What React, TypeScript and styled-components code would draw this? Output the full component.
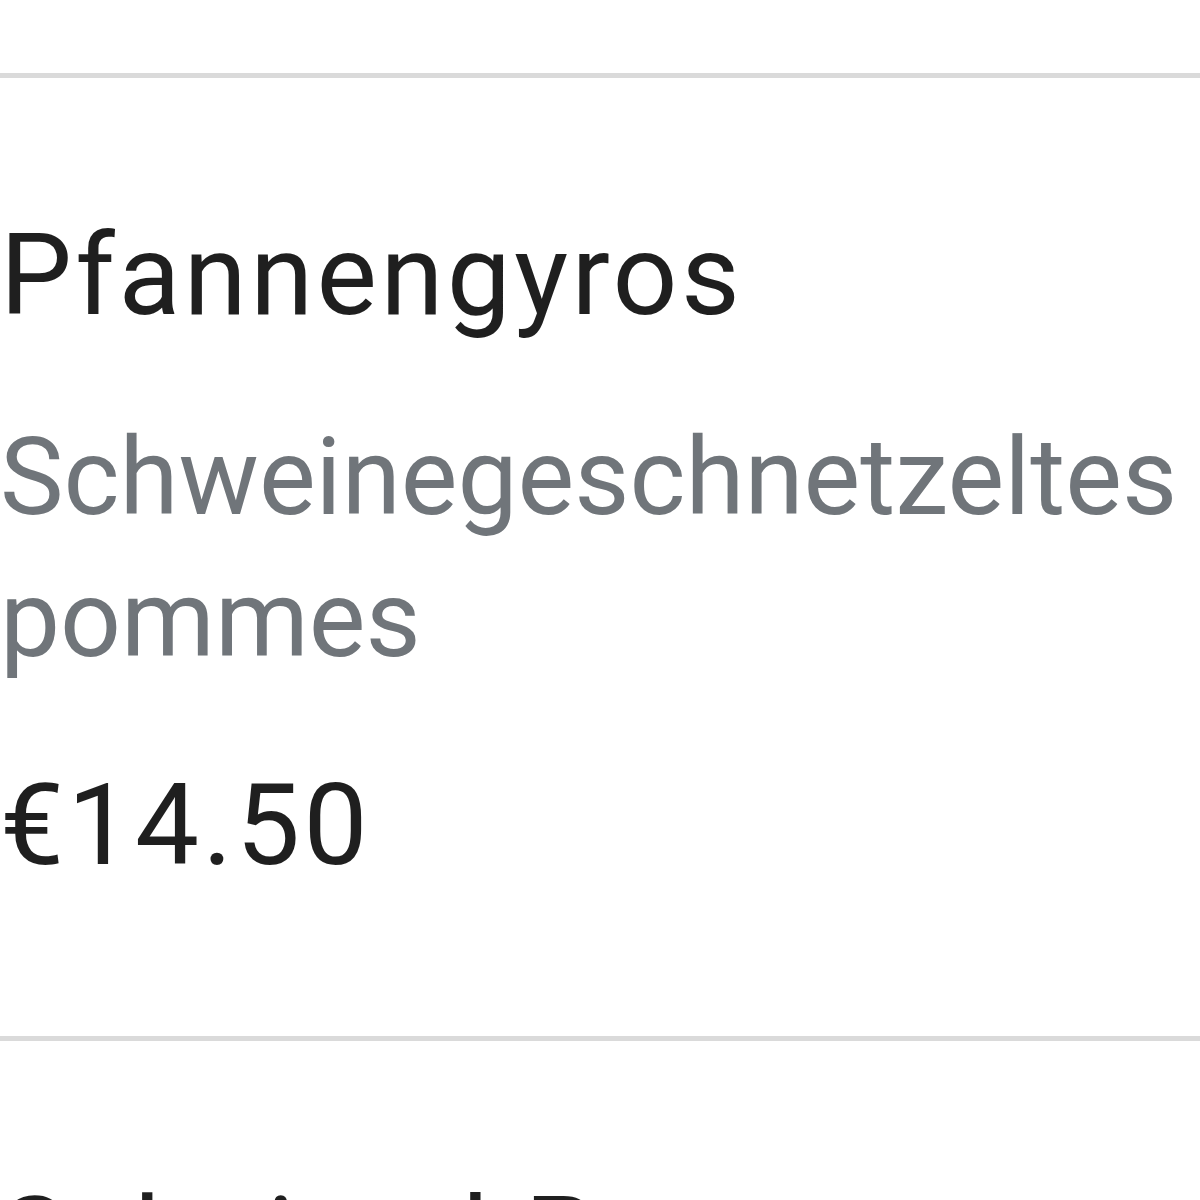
import React from 'react';
import styled, { createGlobalStyle } from 'styled-components';

const GlobalStyle = createGlobalStyle`
  html, body {
    margin: 0;
    padding: 0;
    background: #ffffff;
  }
  body {
    font-family: Roboto, "Noto Sans", Arial, sans-serif;
    -webkit-font-smoothing: antialiased;
    overflow: hidden;
  }
`;

const Menu = styled.div`
  width: 1200px;
  padding-top: 73px;
`;

const Item = styled.div`
  border-top: 5px solid #dadada;
  padding: 126px 0 140px;
  display: flex;
  flex-direction: column;
`;

const Title = styled.div`
  font-size: 114px;
  line-height: 142px;
  color: #1f1f1f;
  letter-spacing: 0.03em;
`;

const Description = styled.div`
  margin-top: 61px;
  font-size: 107px;
  line-height: 142px;
  color: #70757a;
`;

const Price = styled.div`
  margin-top: 63px;
  font-size: 114px;
  line-height: 142px;
  color: #1f1f1f;
  letter-spacing: 0.03em;
`;

type Dish = { name: string; description?: string; price?: string };

const dishes: Dish[] = [
  { name: 'Pfannengyros', description: 'Schweinegeschnetzeltes pommes', price: '€14.50' },
  { name: 'Schnitzel Pommes', description: 'Schweineschnitzel mit pommes', price: '€13.50' },
];

const App = () => (
  <>
    <GlobalStyle />
    <Menu>
      {dishes.map((dish) => (
        <Item key={dish.name}>
          <Title>{dish.name}</Title>
          {dish.description && <Description>{dish.description}</Description>}
          {dish.price && <Price>{dish.price}</Price>}
        </Item>
      ))}
    </Menu>
  </>
);

export default App;
